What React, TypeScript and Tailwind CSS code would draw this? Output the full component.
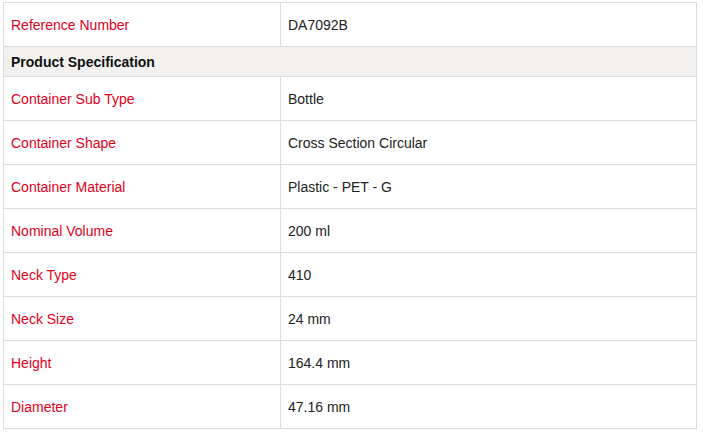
const rows: [string, string][] = [
  ["Container Sub Type", "Bottle"],
  ["Container Shape", "Cross Section Circular"],
  ["Container Material", "Plastic - PET - G"],
  ["Nominal Volume", "200 ml"],
  ["Neck Type", "410"],
  ["Neck Size", "24 mm"],
  ["Height", "164.4 mm"],
  ["Diameter", "47.16 mm"],
];

export default function App() {
  return (
    <div className="w-[703px] h-[438px] bg-white pl-[3px] pt-[2px] font-['Liberation_Sans',Arial,sans-serif] text-[14px]">
      <table className="w-[694px] border-collapse">
        <tbody>
          <tr className="h-[44px]">
            <td className="w-[277px] border border-[#dcdcdc] px-[7px] pt-[2px] text-[#e2001a]">Reference Number</td>
            <td className="border border-[#dcdcdc] px-[7px] pt-[2px] text-[#222]">DA7092B</td>
          </tr>
          <tr className="h-[30px] bg-[#f2f1ef]">
            <td colSpan={2} className="border border-[#dcdcdc] px-[7px] pt-[2px] font-bold text-[#111]">
              Product Specification
            </td>
          </tr>
          {rows.map(([label, value]) => (
            <tr key={label} className="h-[44px]">
              <td className="border border-[#dcdcdc] px-[7px] pt-[2px] text-[#e2001a]">{label}</td>
              <td className="border border-[#dcdcdc] px-[7px] pt-[2px] text-[#222]">{value}</td>
            </tr>
          ))}
        </tbody>
      </table>
    </div>
  );
}
